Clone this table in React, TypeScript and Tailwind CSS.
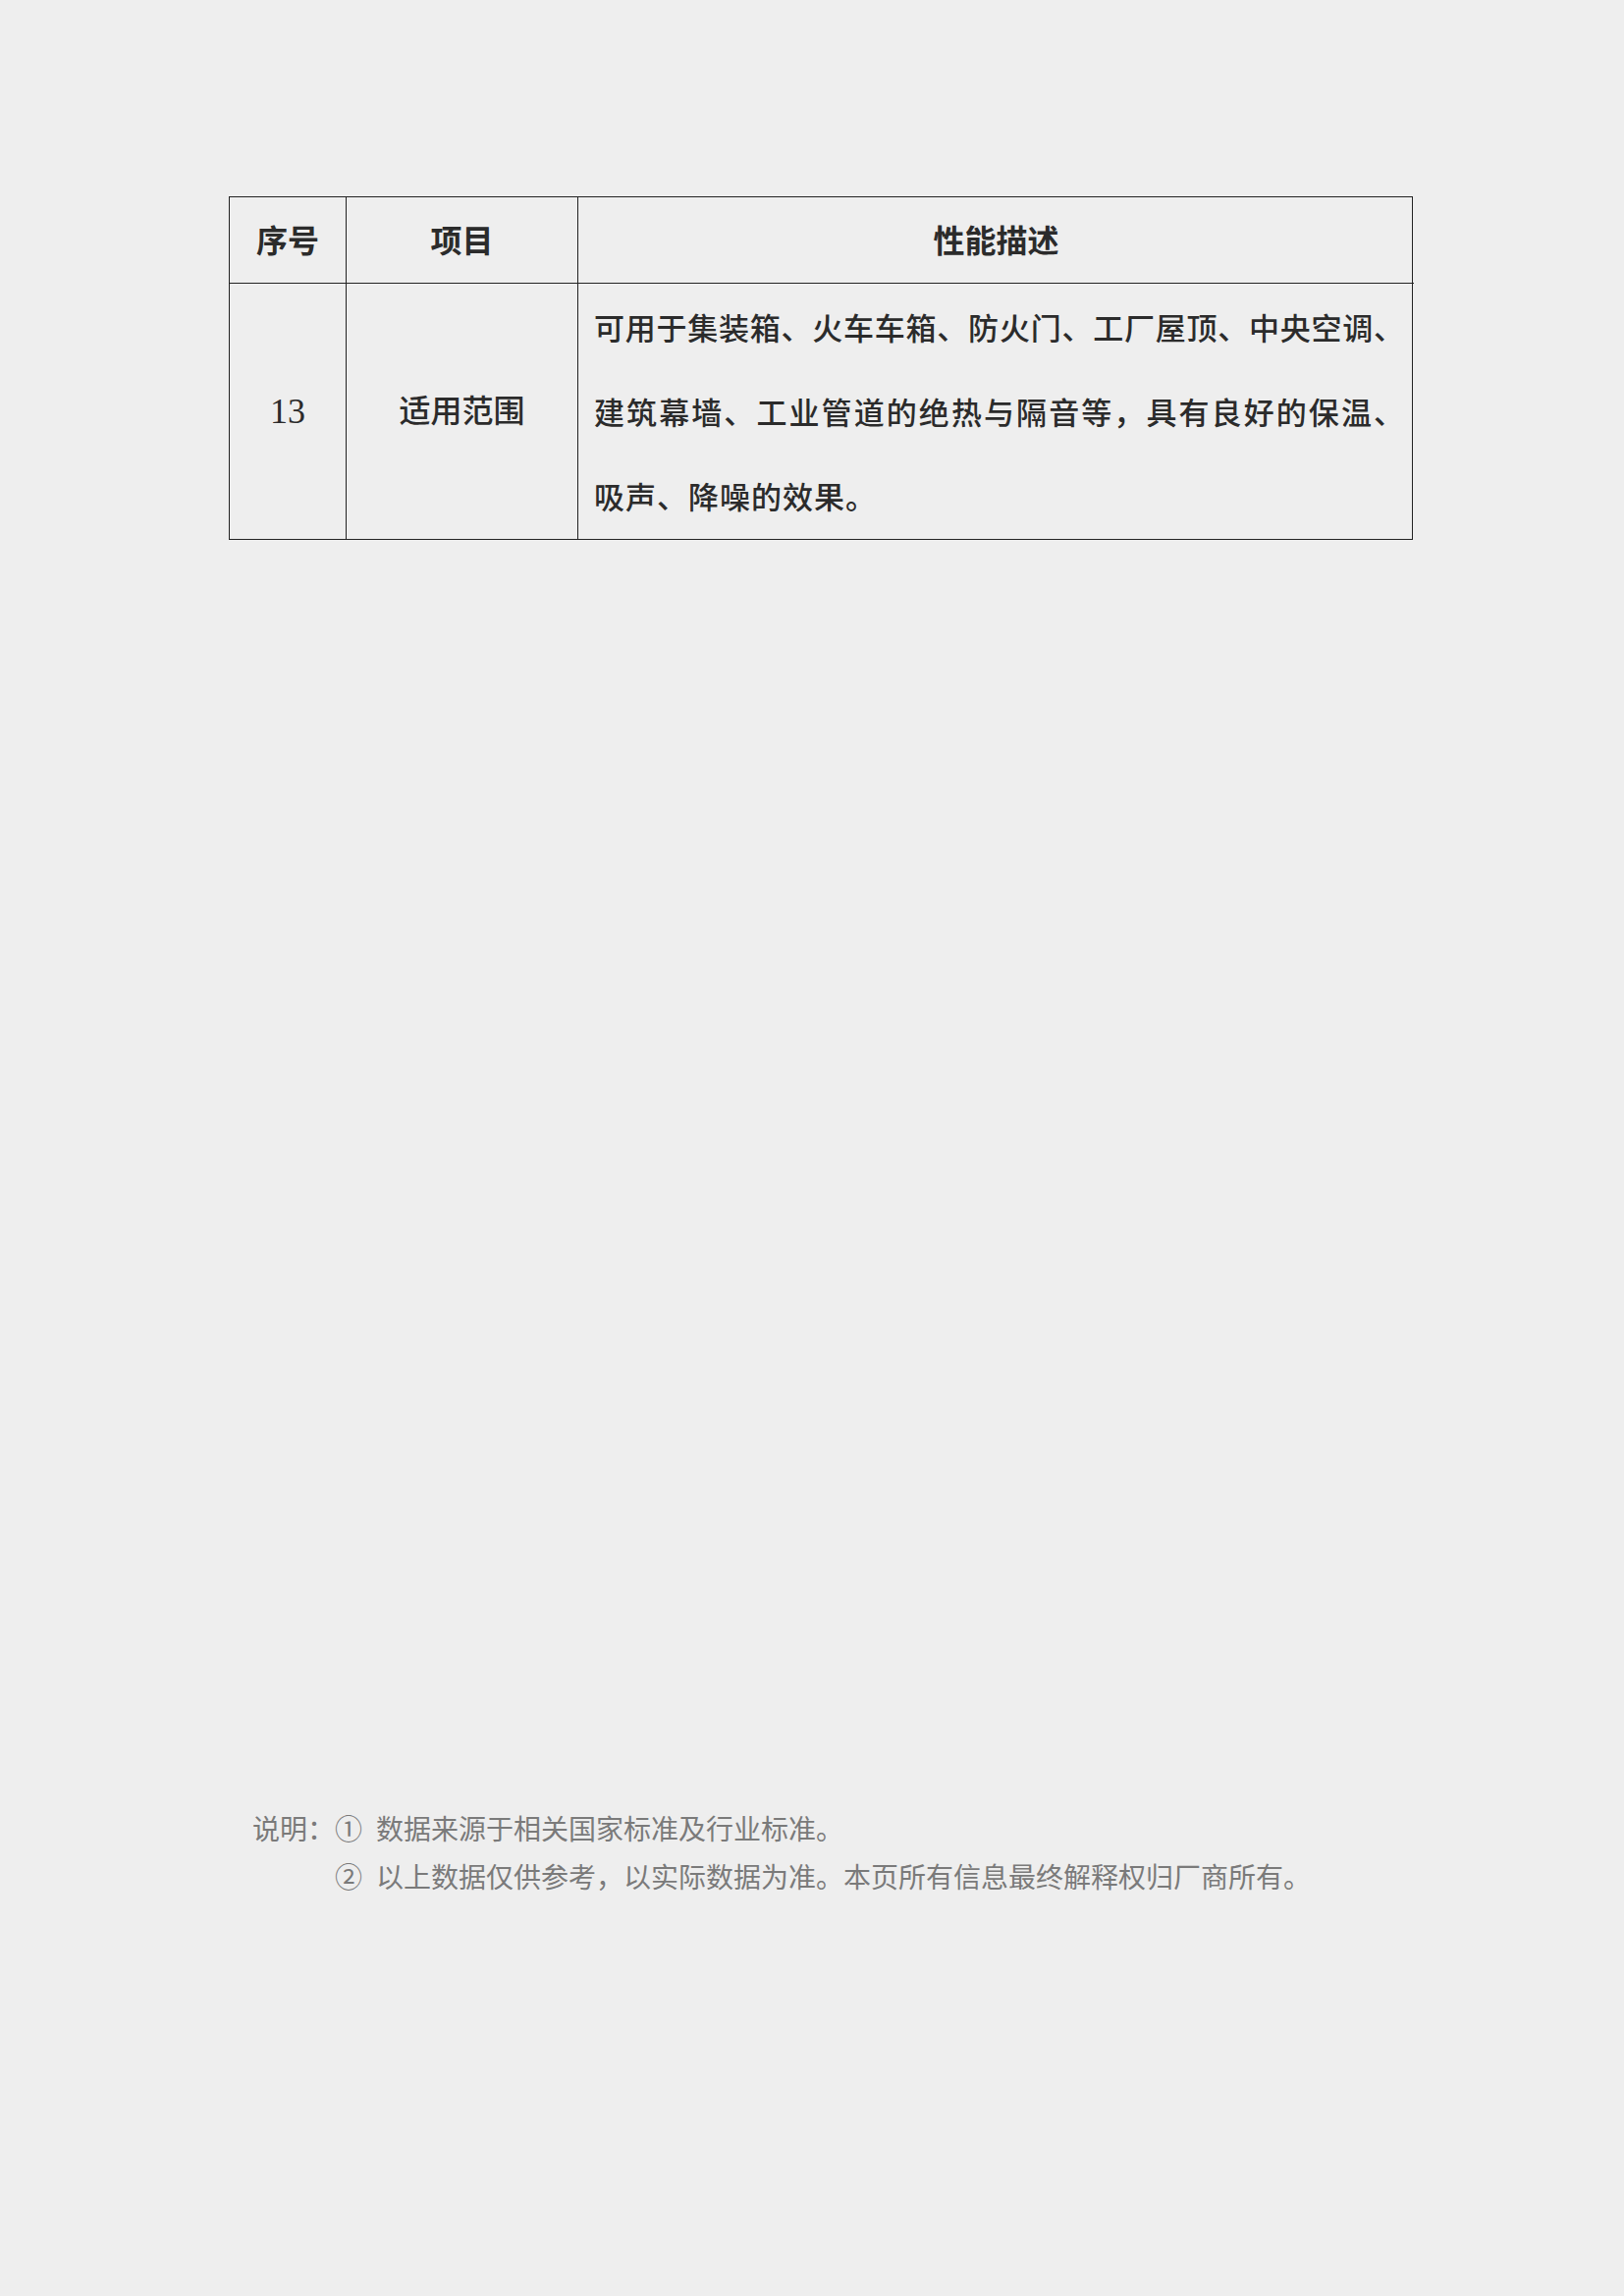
const cjk = "font-['Liberation_Serif','Noto_Sans_CJK_SC',serif]";

const NoteLines = [
  { mark: "①", text: "数据来源于相关国家标准及行业标准。" },
  { mark: "②", text: "以上数据仅供参考，以实际数据为准。本页所有信息最终解释权归厂商所有。" },
];

const App = () => {
  return (
    <div className={`min-h-[2339px] w-[1654px] bg-[#eeeeee] ${cjk}`}>
      <div className="pl-[233px] pt-[200px]">
        <div className="grid w-[1206px] grid-cols-[119px_236px_851px] border-[1.5px] border-[#222] text-[#2b2b2b]">
          {/* header row */}
          <div className="flex h-[88px] items-center justify-center border-r-[1.5px] border-b-[1.5px] border-[#222] pt-[3px] text-[32px] font-bold">
            序号
          </div>
          <div className="flex h-[88px] items-center justify-center border-r-[1.5px] border-b-[1.5px] border-[#222] pt-[3px] text-[32px] font-bold">
            项目
          </div>
          <div className="flex h-[88px] items-center justify-center border-b-[1.5px] border-[#222] pt-[3px] text-[32px] font-bold">
            性能描述
          </div>

          {/* data row */}
          <div className="flex h-[260px] items-center justify-center border-r-[1.5px] border-[#222] text-[36px]">
            13
          </div>
          <div className="flex h-[260px] items-center justify-center border-r-[1.5px] border-[#222] text-[32px] font-medium">
            适用范围
          </div>
          <div className="flex h-[260px] flex-col justify-center whitespace-nowrap pl-[16px] pr-[10px] pt-[6px] text-[31px] font-medium leading-[86px]">
            <p className="text-justify [text-align-last:justify]">
              可用于集装箱、火车车箱、防火门、工厂屋顶、中央空调、
            </p>
            <p className="text-justify [text-align-last:justify]">
              建筑幕墙、工业管道的绝热与隔音等，具有良好的保温、
            </p>
            <p className="tracking-[1px]">吸声、降噪的效果。</p>
          </div>
        </div>
      </div>

      {/* footnote */}
      <div className="mt-[1290px] flex pl-[257px] text-[28px] leading-[49px] text-[#7a7a7a]">
        <span className="w-[84px] shrink-0">说明：</span>
        <div className="flex flex-col">
          {NoteLines.map((line) => (
            <div className="flex gap-[14px]" key={line.mark}>
              <span>{line.mark}</span>
              <span>{line.text}</span>
            </div>
          ))}
        </div>
      </div>
    </div>
  );
};

export default App;
